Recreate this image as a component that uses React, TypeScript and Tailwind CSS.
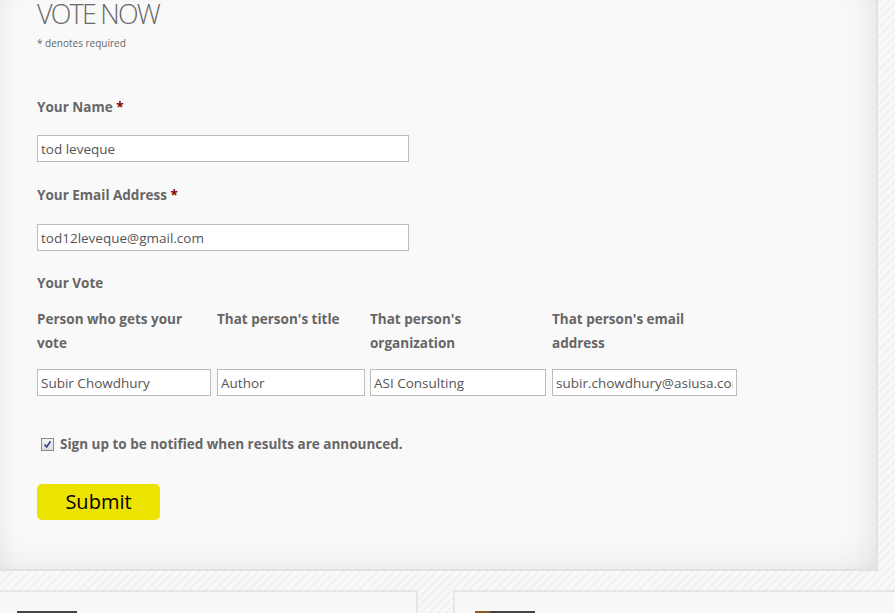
import React from "react";

export default function App() {
  const font = { fontFamily: '"Open Sans", "Noto Sans", sans-serif' };
  return (
    <div
      className="w-[895px] h-[613px] overflow-hidden bg-[#f6f6f6] bg-[repeating-linear-gradient(135deg,#f8f8f8_0px,#f8f8f8_4px,#f1f1f1_4px,#f1f1f1_6px)]"
      style={font}
    >
      <div className="w-[878px] h-[571px] bg-[#f9f9f9] border-r-2 border-b-2 border-[#e2e2e2] shadow-[inset_0_-20px_30px_-10px_rgba(0,0,0,0.05),inset_-30px_0_30px_-20px_rgba(0,0,0,0.06),inset_15px_0_20px_-12px_rgba(0,0,0,0.05)] pl-[37px] text-[#666]">
        <h1 className="text-[27px] leading-[28px] text-[#6a6a6a] font-[350] tracking-[-1.8px] pt-0">VOTE NOW</h1>
        <p className="text-[10px] leading-[14px] mt-[8px] text-[#666]">* denotes required</p>

        <div className="mt-[48px]">
          <label className="block text-[13.5px] font-bold leading-[18px] text-[#666]">
            Your Name <span className="text-[#800000]">*</span>
          </label>
          <input
            readOnly
            value="tod leveque"
            className="mt-[19px] block w-[372px] h-[27px] border border-[#bbb] bg-white px-[3px] text-[13.5px] text-[#555] outline-none"
            style={font}
          />
        </div>

        <div className="mt-[24px]">
          <label className="block text-[13.5px] font-bold leading-[18px] text-[#666]">
            Your Email Address <span className="text-[#800000]">*</span>
          </label>
          <input
            readOnly
            value="tod12leveque@gmail.com"
            className="mt-[20px] block w-[372px] h-[27px] border border-[#bbb] bg-white px-[3px] text-[13.5px] text-[#555] outline-none"
            style={font}
          />
        </div>

        <div className="mt-[20px] text-[13.5px] font-bold leading-[24px] text-[#666]">Your Vote</div>

        <div className="mt-[12px] flex">
          {[
            { l: "Person who gets your vote", v: "Subir Chowdhury", w: "w-[180px]", iw: "w-[174px]" },
            { l: "That person's title", v: "Author", w: "w-[153px]", iw: "w-[148px]" },
            { l: "That person's organization", v: "ASI Consulting", w: "w-[182px]", iw: "w-[176px]" },
            { l: "That person's email address", v: "subir.chowdhury@asiusa.com", w: "w-[190px]", iw: "w-[185px]" },
          ].map((c, i) => (
            <div key={i} className={`${c.w} shrink-0`}>
              <div className="text-[13.5px] font-bold leading-[24px] text-[#666] pr-[20px] h-[48px]">{c.l}</div>
              <input
                readOnly
                value={c.v}
                className={`mt-[14px] block ${c.iw} h-[27px] border border-[#bbb] bg-white px-[3px] text-[13.5px] text-[#555] outline-none`}
                style={font}
              />
            </div>
          ))}
        </div>

        <div className="mt-[39px] flex items-center pl-[4px]">
          <span className="w-[13px] h-[13px] border border-[#8a8a8a] bg-[linear-gradient(#f4f4f4,#dcdcdc)] flex items-center justify-center">
            <svg width="9" height="9" viewBox="0 0 9 9">
              <path d="M1.5 4.5 L3.6 7 L7.6 1.2" stroke="#2c3f8c" strokeWidth="1.6" fill="none" />
            </svg>
          </span>
          <span className="ml-[6px] text-[13.5px] font-bold leading-[18px] text-[#666]">
            Sign up to be notified when results are announced.
          </span>
        </div>

        <button
          className="mt-[31px] w-[123px] h-[36px] rounded-[5px] bg-[#ede300] text-[20px] text-black leading-none"
          style={font}
        >
          Submit
        </button>
      </div>

      <div className="mt-[19px] flex">
        <div className="shrink-0 ml-[-20px] w-[438px] h-[60px] bg-[#f8f8f8] border-2 border-[#e6e6e6] pl-[35px] pt-[19px]">
          <div className="w-[60px] h-[10px] bg-[#444]" />
        </div>
        <div className="shrink-0 ml-[35px] w-[460px] h-[60px] bg-[#f8f8f8] border-2 border-[#e6e6e6] pl-[20px] pt-[19px]">
          <div className="w-[60px] h-[10px] bg-[linear-gradient(90deg,#8a5a20_0px,#8a5a20_15px,#444_15px)]" />
        </div>
      </div>
    </div>
  );
}
